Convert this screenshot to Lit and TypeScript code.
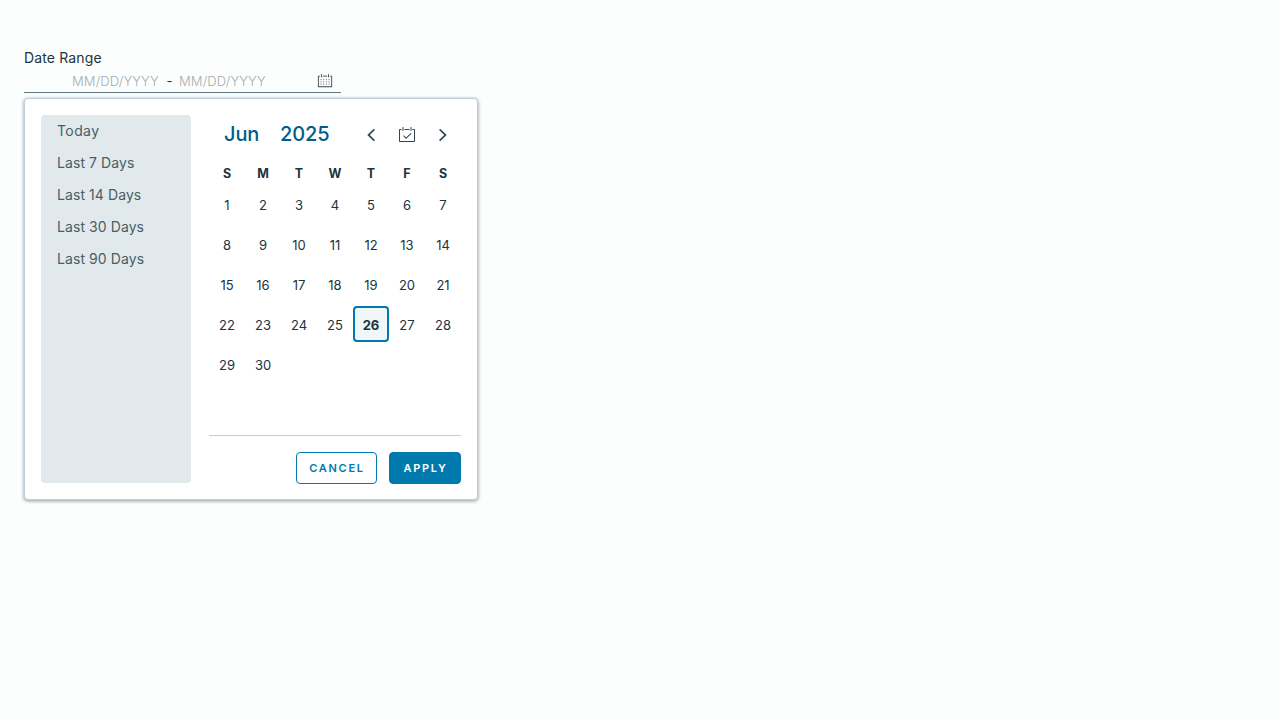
import { LitElement, html, css, svg } from "lit";
import { customElement } from "lit/decorators.js";
import { classMap } from "lit/directives/class-map.js";

const frame = svg`
  <path d="M32.25,6H29V8h3V30H4V8H7V6H3.75A1.78,1.78,0,0,0,2,7.81V30.19A1.78,1.78,0,0,0,3.75,32h28.5A1.78,1.78,0,0,0,34,30.19V7.81A1.78,1.78,0,0,0,32.25,6Z"/>
  <path d="M10,10a1,1,0,0,0,1-1V3A1,1,0,0,0,9,3V9A1,1,0,0,0,10,10Z"/>
  <path d="M26,10a1,1,0,0,0,1-1V3a1,1,0,0,0-2,0V9A1,1,0,0,0,26,10Z"/>
  <rect x="13" y="6" width="10" height="2"/>`;
const dots = [14, 19, 24].map((y) =>
  [8, 14, 20, 26].map((x) => svg`<rect x=${x} y=${y} width="2" height="2"/>`)
);
const check = svg`<path d="M16.17,25.86,10.81,20.5a1,1,0,0,1,1.41-1.41L16.17,23l8.64-8.64a1,1,0,0,1,1.41,1.41Z"/>`;
const angle = svg`<path d="M29.52,22.52,18,10.6,6.48,22.52a1.7,1.7,0,0,0,2.45,2.36L18,15.49l9.08,9.39a1.7,1.7,0,0,0,2.45-2.36Z"/>`;

@customElement("app-root")
export class AppRoot extends LitElement {
  static styles = css`
    :host {
      display: block;
      box-sizing: border-box;
      height: 720px;
      padding: 48px 24px 0;
      overflow: hidden;
      background: #fcfefe;
      color: #21333b;
      font: 400 14px/20px Metropolis, Inter, sans-serif;
    }
    * { box-sizing: border-box; }
    svg { display: block; fill: #314851; }
    .label { height: 20px; letter-spacing: 0.15px; }
    .field {
      display: flex;
      align-items: center;
      width: 317px;
      height: 25px;
      padding: 1px 8px 0 48px;
      border-bottom: 1px solid #5f7781;
      font-size: 13px;
    }
    .hint { width: 88px; color: #a3adb2; font-weight: 300; letter-spacing: 0.14px; white-space: nowrap; }
    .dash { width: 19px; text-align: center; }
    .field svg { margin-left: auto; width: 16px; height: 16px; }
    .panel {
      display: flex;
      gap: 18px;
      width: 454px;
      height: 402px;
      margin-top: 5px;
      padding: 16px;
      border: 1px solid #c1cdd4;
      border-radius: 4px;
      background: #fff;
      box-shadow: 0 1px 3px 1px rgba(33, 51, 59, 0.32);
    }
    .presets {
      width: 150px;
      height: 368px;
      padding-left: 16px;
      border-radius: 4px;
      background: #e1e9ec;
      color: #4a5d66;
    }
    .preset { height: 32px; line-height: 32px; letter-spacing: 0.08px; }
    .preset:first-child { letter-spacing: 0.4px; }
    .main { width: 252px; }
    .head { display: flex; align-items: center; height: 40px; padding-left: 15px; }
    .title { width: 56px; padding-bottom: 2px; color: #005d8b; font-size: 20px; font-weight: 500; line-height: 24px; letter-spacing: -0.1px; }
    .year { width: 73px; }
    .nav { display: flex; justify-content: center; width: 36px; }
    .nav svg { width: 18px; height: 18px; }
    .prev { transform: rotate(-90deg); }
    .next { transform: rotate(90deg); }
    .week { display: grid; grid-template-columns: repeat(7, 36px); height: 30px; line-height: 38px; font-size: 12.5px; font-weight: 700; text-align: center; }
    .days { display: grid; grid-template-columns: repeat(7, 36px); grid-auto-rows: 40px; height: 250px; font-size: 13px; }
    .day { display: flex; align-items: center; justify-content: center; height: 36px; margin-top: 1px; padding-top: 1px; line-height: 18px; }
    .today { border: 2px solid #0079ad; border-radius: 4px; background: #f1f6f8; font-weight: 700; }
    .actions { display: flex; justify-content: flex-end; gap: 12px; height: 49px; padding-top: 16px; border-top: 1px solid #c1cdd4; }
    .btn {
      width: 81px;
      height: 32px;
      padding: 0;
      border: 1px solid #0079ad;
      border-radius: 4px;
      background: transparent;
      color: #0079ad;
      font: 600 11px/30px Metropolis, Inter, sans-serif;
      letter-spacing: 1.7px;
      text-indent: 1px;
      text-align: center;
    }
    .primary { width: 72px; background: #0079ad; color: #fff; }
  `;

  render() {
    const days = Array.from({ length: 30 }, (_, i) => i + 1);
    return html`
      <div class="label">Date Range</div>
      <div class="field">
        <span class="hint">MM/DD/YYYY</span><span class="dash">-</span><span class="hint">MM/DD/YYYY</span>
        <svg viewBox="0 0 36 36">${frame}${dots}</svg>
      </div>
      <div class="panel">
        <div class="presets">
          ${["Today", "Last 7 Days", "Last 14 Days", "Last 30 Days", "Last 90 Days"].map(
            (p) => html`<div class="preset">${p}</div>`
          )}
        </div>
        <div class="main">
          <div class="head">
            <span class="title">Jun</span><span class="title year">2025</span>
            <span class="nav"><svg class="prev" viewBox="0 0 36 36">${angle}</svg></span>
            <span class="nav"><svg viewBox="0 0 36 36">${frame}${check}</svg></span>
            <span class="nav"><svg class="next" viewBox="0 0 36 36">${angle}</svg></span>
          </div>
          <div class="week">${["S", "M", "T", "W", "T", "F", "S"].map((d) => html`<span>${d}</span>`)}</div>
          <div class="days">
            ${days.map((d) => html`<div class=${classMap({ day: true, today: d === 26 })}>${d}</div>`)}
          </div>
          <div class="actions">
            <button class="btn">CANCEL</button><button class="btn primary">APPLY</button>
          </div>
        </div>
      </div>
    `;
  }
}
